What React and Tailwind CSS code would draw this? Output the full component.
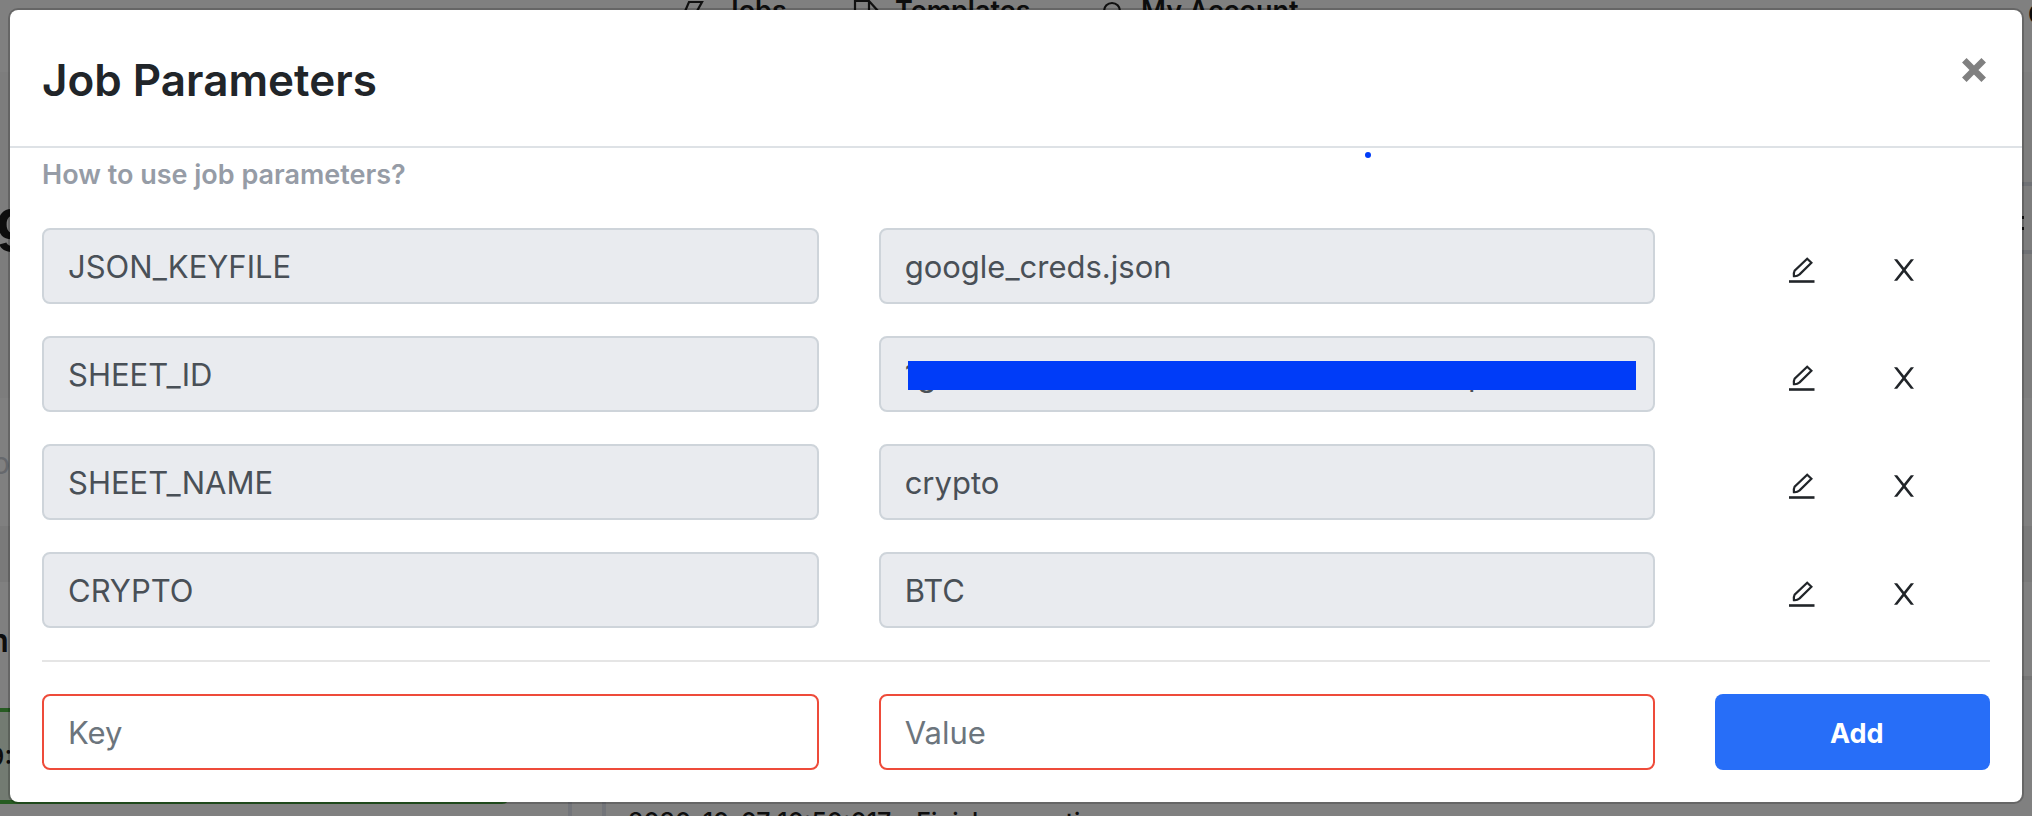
import React from "react";

const params = [
  { key: "JSON_KEYFILE", value: "google_creds.json" },
  { key: "SHEET_ID", value: "1g" + " ".repeat(61) + "p", redacted: true },
  { key: "SHEET_NAME", value: "crypto" },
  { key: "CRYPTO", value: "BTC" },
];

const fieldBase =
  "block h-[76px] w-full min-w-0 rounded-lg border-2 px-6 text-[31px] leading-10 outline-none";

function EditIcon() {
  return (
    <svg width="28" height="28" viewBox="0 0 28 28" fill="none" stroke="#212529" aria-hidden="true">
      <path d="M19.2 2.8 L23.4 6.8 L11.6 18.4 Q9 20.6 5.9 20.2 Q5.4 17 6.6 14.8 Z" strokeWidth="2.2" />
      <path d="M1 25.5 H26.5" strokeWidth="2.6" />
    </svg>
  );
}

function RemoveIcon() {
  return (
    <svg width="20" height="22" viewBox="0 0 20 22" fill="#212529" aria-hidden="true">
      <path d="M0 0.2 H3.2 L10 8.8 L16.8 0.2 H20 L11.6 11 L20 21.8 H16.8 L10 13.2 L3.2 21.8 H0 L8.4 11 Z" />
    </svg>
  );
}

function NavItem({ label, className, children }) {
  return (
    <span className={`flex shrink-0 items-start gap-[15px] ${className}`}>
      <svg width="28" height="30" viewBox="0 0 28 30" fill="none" stroke="#111" strokeWidth="2.2" aria-hidden="true">
        {children}
      </svg>
      <span className="whitespace-nowrap">{label}</span>
    </span>
  );
}

function Backdrop() {
  return (
    <div
      className="absolute inset-0 flex flex-col overflow-hidden bg-[#808080] text-[#0d0d0d]"
      aria-hidden="true"
    >
      <div className="flex h-[72px] shrink-0 items-start pl-[680px] text-[27px] leading-[22px] font-semibold">
        <NavItem label="Jobs" className="w-[172px]">
          <path d="M9 2 H22 L16 13 H22 L6 28 L10 16 H3 Z" />
        </NavItem>
        <NavItem label="Templates" className="w-[246px]">
          <path d="M3 1 H17 L26 11 V28 H3 Z M17 1 V11 H26" />
        </NavItem>
        <NavItem label="My Account" className="">
          <circle cx="14" cy="11" r="8" />
        </NavItem>
        <span className="ml-auto w-1 pt-1">C</span>
      </div>

      <div className="flex h-[326px] shrink-0 items-start justify-between bg-[#7d7d7d]">
        <span className="-ml-1 pt-[120px] text-[56px] leading-[56px] font-bold">g</span>
        <div className="mt-[110px] h-[72px] w-5 border-y-4 border-[#6f7175] px-[2px] py-[30px]">
          <div className="h-[14px] w-[10px] border-y-[3px] border-[#111]" />
        </div>
      </div>

      <div className="h-[128px] shrink-0 pt-[50px] text-[30px] leading-[30px] text-[#66686c]">
        <span className="-ml-2">o</span>
      </div>

      <div className="h-14 shrink-0 bg-[#7a7a7a]" />

      <div className="flex min-h-0 flex-1 items-start">
        <div className="w-[568px] shrink-0 pt-[43px]">
          <div className="-ml-5 text-[32px] leading-8 font-semibold">m</div>
          <div className="mt-[51px] -ml-3 h-[96px] w-[522px] rounded-lg border-4 border-[#275c22] bg-[#737b72] pt-8 text-[26px] leading-[26px] font-medium">
            <span className="-ml-1">9:</span>
          </div>
        </div>
        <div className="w-[38px] shrink-0 self-stretch border-x-4 border-[#73757a]" />
        <p className="flex-1 pt-[228px] pl-[22px] text-[25px] leading-6 font-medium whitespace-nowrap">
          2020-10-07 10:50:017 - Finish executing
        </p>
        <div className="mt-[94px] h-1 w-5 bg-[#757575]" />
      </div>
    </div>
  );
}

export default function App() {
  return (
    <div className="relative min-h-screen font-['Inter','Liberation_Sans',sans-serif]">
      <Backdrop />
      <div className="relative px-2 pt-2 pb-3">
        <section
          role="dialog"
          aria-labelledby="dialog-title"
          className="rounded-[10px] border-2 border-black/20 bg-white bg-clip-padding"
        >
          <header className="flex items-start justify-between border-b-2 border-[#dee2e6] pt-9 pr-7 pb-8 pl-8">
            <h1 id="dialog-title" className="text-[44px] leading-[68px] font-semibold text-[#212529]">
              Job Parameters
            </h1>
            <button type="button" aria-label="Close" className="px-1 py-2">
              <svg width="32" height="32" viewBox="0 0 32 32" stroke="#808080" strokeWidth="6.4" aria-hidden="true">
                <path d="M6.3 6.3 L25.7 25.7 M25.7 6.3 L6.3 25.7" />
              </svg>
            </button>
          </header>

          <div className="relative px-8 pt-[7px] pb-8">
            <span className="absolute top-1 left-[67.35%] size-[6px] rounded-full bg-[#003cf8]" />
            <a href="#help" className="block w-fit text-[27px] leading-10 font-semibold text-[#969ca6]">
              How to use job parameters?
            </a>

            <div className="mt-[33px] flex flex-col gap-8">
              {params.map((p) => (
                <div key={p.key} className="grid grid-cols-12 gap-x-[60px]">
                  <div className="col-span-5">
                    <input
                      aria-label="Parameter key"
                      defaultValue={p.key}
                      disabled
                      className={`${fieldBase} border-[#ced4da] bg-[#e9ebef] text-[#495057]`}
                    />
                  </div>
                  <div className="relative col-span-5">
                    <input
                      aria-label={`Value of ${p.key}`}
                      defaultValue={p.value}
                      disabled
                      className={`${fieldBase} border-[#ced4da] bg-[#e9ebef] text-[#495057]`}
                    />
                    {p.redacted && (
                      <span className="absolute top-[25px] right-[19px] left-[29px] h-[29px] bg-[#003cf8]" />
                    )}
                  </div>
                  <div className="col-span-2 flex items-center justify-center gap-[78px] pt-2 pr-1">
                    <button type="button" aria-label={`Edit ${p.key}`}>
                      <EditIcon />
                    </button>
                    <button type="button" aria-label={`Remove ${p.key}`}>
                      <RemoveIcon />
                    </button>
                  </div>
                </div>
              ))}
            </div>

            <hr className="my-8 border-t-2 border-[#e5e5e5]" />

            <form className="grid grid-cols-12 gap-x-[60px]" onSubmit={(e) => e.preventDefault()}>
              <input
                aria-label="Key"
                placeholder="Key"
                className={`${fieldBase} col-span-5 border-[#ee4b3a] bg-white placeholder:text-[#6c757d]`}
              />
              <input
                aria-label="Value"
                placeholder="Value"
                className={`${fieldBase} col-span-5 border-[#ee4b3a] bg-white placeholder:text-[#6c757d]`}
              />
              <button
                type="submit"
                className="col-span-2 h-[76px] rounded-lg bg-[#276ef8] pt-1 pl-2 text-[27px] leading-10 font-bold text-white"
              >
                Add
              </button>
            </form>
          </div>
        </section>
      </div>
    </div>
  );
}
